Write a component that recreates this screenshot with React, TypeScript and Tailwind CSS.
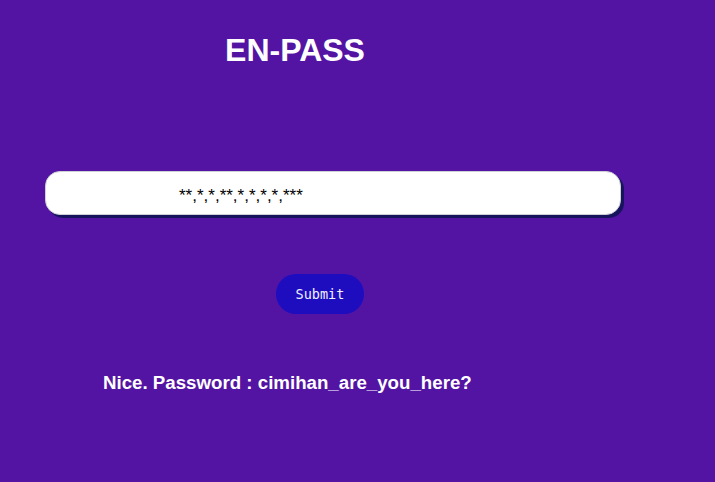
export default function App() {
  return (
    <div className="min-h-screen w-full bg-[#5314a3] font-['Liberation_Sans',Arial,sans-serif] text-white">
      <div className="flex w-[590px] justify-center pt-[30px]">
        <h1 className="text-[32px] font-bold leading-[40px]">EN-PASS</h1>
      </div>
      <div className="mt-[101px] pl-[45px]">
        <div className="flex h-[44px] w-[576px] items-center rounded-[15px] border border-[#cfcfd6] bg-white pl-[133px] pt-[6px] text-[17px] text-black shadow-[3px_3px_0_#17145e]">
          **,*,*,**,*,*,*,*,***
        </div>
      </div>
      <div className="mt-[59px] pl-[276px]">
        <button className="h-[40px] w-[88px] rounded-full bg-[#1d0dbf] font-['DejaVu_Sans_Mono',monospace] text-[13.5px] text-[#f0f0ff]">
          Submit
        </button>
      </div>
      <p className="mt-[57px] pl-[103px] text-[18.7px] font-bold leading-[24px]">
        Nice. Password : cimihan_are_you_here?
      </p>
    </div>
  );
}
